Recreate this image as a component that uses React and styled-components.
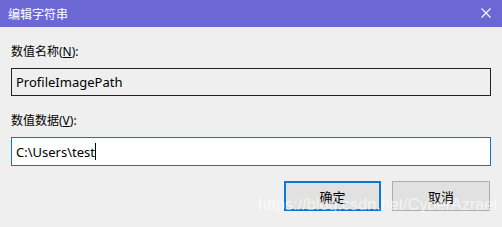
import React from "react";
import styled, { createGlobalStyle } from "styled-components";

const GlobalStyle = createGlobalStyle`
  html, body {
    margin: 0;
    padding: 0;
    background: #f0f0f0;
  }
  * {
    box-sizing: border-box;
  }
`;

const Window = styled.div`
  position: relative;
  width: 502px;
  height: 227px;
  background: #efefef;
  font-family: "Segoe UI", "Noto Sans", "Noto Sans CJK SC", sans-serif;
  font-size: 12px;
  color: #000;
  overflow: hidden;
`;

const TitleBar = styled.div`
  height: 27px;
  background: #6b68d5;
  display: flex;
  align-items: center;
  justify-content: space-between;
  padding: 0 11px 0 8px;
  color: #fff;
`;

const Title = styled.span`
  font-size: 12px;
  line-height: 1;
  font-family: "Noto Sans CJK SC", sans-serif;
`;

const CloseIcon = styled.svg`
  width: 10px;
  height: 10px;
  margin-top: -1px;
`;

const Body = styled.div`
  display: flex;
  flex-direction: column;
  padding: 16px 11px 0 11px;
`;

const Label = styled.div`
  height: 17px;
  line-height: 17px;
  font-family: "Noto Sans", "Noto Sans CJK SC", sans-serif;
  margin-bottom: ${(p) => p.$gap}px;
`;

const Key = styled.span`
  text-decoration: underline;
  text-underline-offset: 1px;
`;

const Field = styled.div`
  height: ${(p) => p.$h}px;
  border: 1px solid ${(p) => (p.$focused ? "#1673c9" : "#222")};
  background: ${(p) => (p.$focused ? "#fff" : "#efefef")};
  display: flex;
  align-items: center;
  padding-left: 4px;
  font-size: 13px;
  margin-bottom: ${(p) => p.$gap}px;
`;

const Caret = styled.span`
  display: inline-block;
  width: 1px;
  height: 17px;
  background: #000;
`;

const Buttons = styled.div`
  display: flex;
  justify-content: flex-end;
  gap: 11px;
  padding-right: 1px;
`;

const Button = styled.div`
  width: ${(p) => p.$w}px;
  height: 30px;
  background: #e1e1e1;
  border: ${(p) => (p.$primary ? "2px solid #0a78d7" : "1px solid #adadad")};
  display: flex;
  align-items: center;
  justify-content: center;
  font-family: "Noto Sans CJK SC", sans-serif;
  font-size: 13px;
`;

const Watermark = styled.div`
  position: absolute;
  left: 258px;
  top: 196px;
  font-family: "Liberation Sans", Arial, sans-serif;
  font-size: 16px;
  letter-spacing: 0.1px;
  color: rgba(255, 255, 255, 0.65);
  pointer-events: none;
  white-space: nowrap;
`;

export default function App() {
  return (
    <>
      <GlobalStyle />
      <Window>
        <TitleBar>
          <Title>编辑字符串</Title>
          <CloseIcon viewBox="0 0 10 10">
            <path d="M0.5 0.5 L9.5 9.5 M9.5 0.5 L0.5 9.5" stroke="#fff" strokeWidth="1.1" />
          </CloseIcon>
        </TitleBar>
        <Body>
          <Label $gap={8}>
            数值名称(<Key>N</Key>):
          </Label>
          <Field $h={28} $gap={16}>ProfileImagePath</Field>
          <Label $gap={8}>
            数值数据(<Key>V</Key>):
          </Label>
          <Field $h={29} $gap={15} $focused>
            C:\Users\test
            <Caret />
          </Field>
          <Buttons>
            <Button $w={97} $primary>确定</Button>
            <Button $w={98}>取消</Button>
          </Buttons>
        </Body>
        <Watermark>https://blog.csdn.net/CyberAzrael</Watermark>
      </Window>
    </>
  );
}
